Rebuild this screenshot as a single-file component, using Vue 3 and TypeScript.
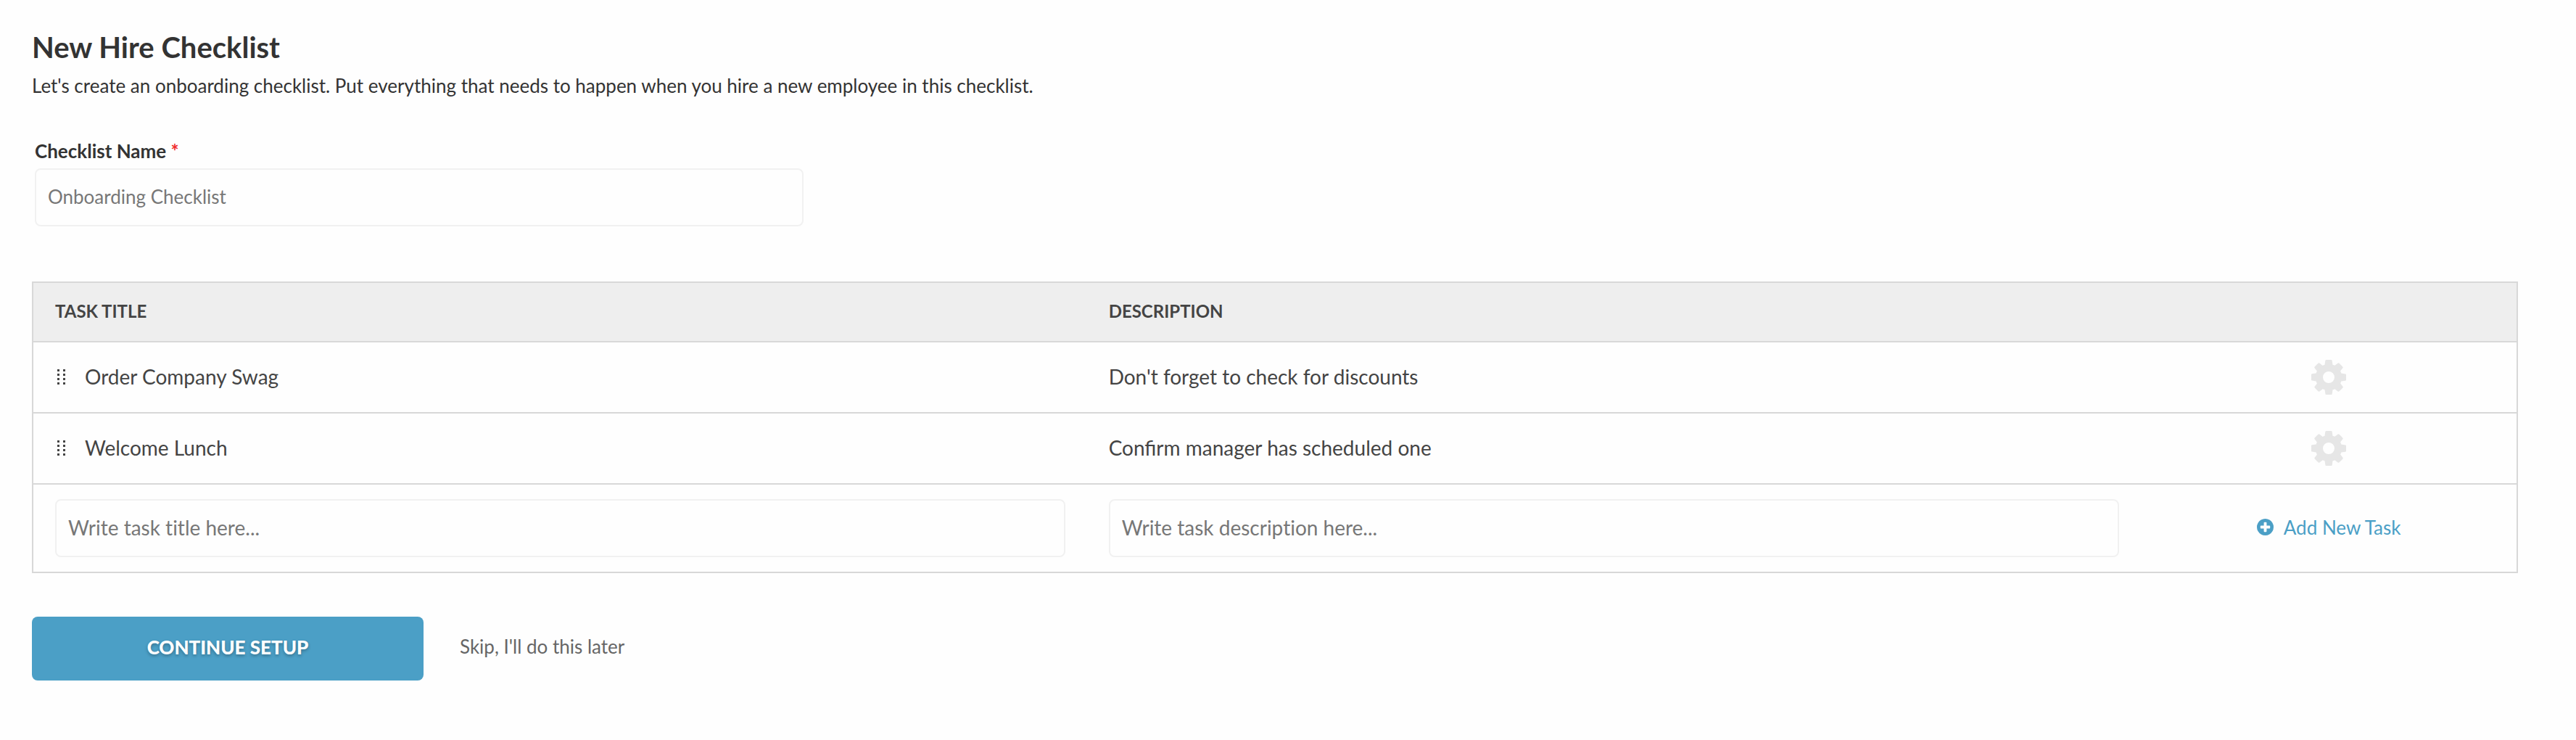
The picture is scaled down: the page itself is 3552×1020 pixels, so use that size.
<script setup lang="ts">
import { ref } from 'vue'

interface Task {
  title: string
  description: string
}

const checklistName = ref('')
const newTitle = ref('')
const newDescription = ref('')

const tasks = ref<Task[]>([
  { title: 'Order Company Swag', description: "Don't forget to check for discounts" },
  { title: 'Welcome Lunch', description: 'Confirm manager has scheduled one' },
])

function addTask() {
  if (!newTitle.value.trim()) return
  tasks.value.push({ title: newTitle.value, description: newDescription.value })
  newTitle.value = ''
  newDescription.value = ''
}
</script>

<template>
  <main class="page">
    <header>
      <h1>New Hire Checklist</h1>
      <p class="intro">
        Let's create an onboarding checklist. Put everything that needs to happen when you hire a new employee in this checklist.
      </p>
    </header>

    <div class="field">
      <label for="checklist-name">Checklist Name <span class="required">*</span></label>
      <input id="checklist-name" v-model="checklistName" class="input" type="text" placeholder="Onboarding Checklist" required />
    </div>

    <table class="tasks">
      <colgroup>
        <col class="col-text" />
        <col class="col-text" />
        <col />
      </colgroup>
      <thead>
        <tr>
          <th scope="col">TASK TITLE</th>
          <th scope="col">DESCRIPTION</th>
          <td></td>
        </tr>
      </thead>
      <tbody>
        <tr v-for="task in tasks" :key="task.title">
          <td>
            <div class="task-title">
              <svg class="grip" viewBox="0 0 11 21" aria-hidden="true">
                <template v-for="y in [0, 6, 12, 18]" :key="y">
                  <rect x="0" :y="y" width="3" height="3" />
                  <rect x="8" :y="y" width="3" height="3" />
                </template>
              </svg>
              <span>{{ task.title }}</span>
            </div>
          </td>
          <td>{{ task.description }}</td>
          <td class="actions">
            <button class="gear" type="button" :aria-label="'Settings for ' + task.title">
              <svg viewBox="0 -128 1536 1536" fill-rule="evenodd" aria-hidden="true">
                <path d="M1024 640A256 256 0 1 1 512 640A256 256 0 1 1 1024 640zM1536 531v222q0 12-8 23t-20 13l-185 28q-19 54-39 91 35 50 107 138 10 12 10 25t-9 23q-27 37-99 108t-94 71q-12 0-26-9l-138-108q-44 23-91 38-16 136-29 186-7 28-36 28h-222q-14 0-24.500-8.500t-11.500-21.500l-28-184q-49-16-90-37l-141 107q-10 9-25 9-14 0-25-11-126-114-165-168-7-10-7-23 0-12 8-23 15-21 51-66.500t54-70.500q-27-50-41-99l-183-27q-13-2-21-12.500t-8-23.500v-222q0-12 8-23t19-13l186-28q14-46 39-92-40-57-107-138-10-12-10-24 0-10 9-23 26-36 98.500-107.500t94.500-71.500q13 0 26 10l138 107q44-23 91-38 16-136 29-186 7-28 36-28h222q14 0 24.500 8.500t11.500 21.500l28 184q49 16 90 37l142-107q9-9 24-9 13 0 25 10 129 119 165 170 7 8 7 22 0 12-8 23-15 21-51 66.500t-54 70.500q26 50 41 98l183 28q13 2 21 12.500t8 23.500z" />
              </svg>
            </button>
          </td>
        </tr>
        <tr class="new-task">
          <td>
            <input v-model="newTitle" class="input" type="text" aria-label="Task title" placeholder="Write task title here..." />
          </td>
          <td>
            <input v-model="newDescription" class="input" type="text" aria-label="Task description" placeholder="Write task description here..." />
          </td>
          <td class="actions">
            <button class="add" type="button" @click="addTask">
              <svg viewBox="0 0 1536 1536" aria-hidden="true">
                <path d="M1216 832v-128q0-26-19-45t-45-19h-256v-256q0-26-19-45t-45-19h-128q-26 0-45 19t-19 45v256h-256q-26 0-45 19t-19 45v128q0 26 19 45t45 19h256v256q0 26 19 45t45 19h128q26 0 45-19t19-45v-256h256q26 0 45-19t19-45zm320-64q0 209-103 385.500t-279.500 279.500-385.500 103-385.500-103-279.500-279.500-103-385.500 103-385.500 279.500-279.500 385.500-103 385.500 103 279.500 279.500 103 385.500z" />
              </svg>
              <span>Add New Task</span>
            </button>
          </td>
        </tr>
      </tbody>
    </table>

    <footer class="footer">
      <button class="primary" type="button">CONTINUE SETUP</button>
      <a class="skip" href="#">Skip, I'll do this later</a>
    </footer>
  </main>
</template>

<style>
body {
  margin: 0;
  background: #fefefe;
}
</style>

<style scoped>
.page {
  padding: 39px 80px 80px 44px;
  font-family: Lato, 'Liberation Sans', sans-serif;
  font-size: 26px;
  line-height: 36px;
  color: #333;
}

h1 {
  margin: 0;
  font-size: 40px;
  line-height: 52px;
  font-weight: 700;
}

.intro {
  margin: 9px 0 0;
}

.field {
  display: flex;
  flex-direction: column;
  width: 31%;
  min-width: 320px;
  max-width: 1060px;
  margin: 54px 0 76px 4px;
}

label {
  margin-bottom: 6px;
  font-weight: 700;
}

.required {
  color: #f02c2c;
}

.input {
  display: block;
  box-sizing: border-box;
  width: 100%;
  height: 80px;
  padding: 0 16px 2px;
  border: 2px solid #f1f1f1;
  border-radius: 8px;
  background: transparent;
  font: inherit;
  font-variant-ligatures: none;
  color: #444;
}

.input::placeholder {
  color: #777;
  opacity: 1;
}

button {
  padding: 0;
  border: 0;
  background: none;
  font: inherit;
  cursor: pointer;
}

.tasks {
  width: 100%;
  table-layout: fixed;
  border-collapse: collapse;
  border: 2px solid #d8d8d8;
  font-size: 28px;
  color: #444;
}

.col-text {
  width: 42.43%;
}

.tasks tr {
  height: 98px;
  border-bottom: 2px solid #d8d8d8;
}

.tasks th,
.tasks td {
  padding: 0 30px 2px;
  text-align: left;
  vertical-align: middle;
}

.tasks thead tr {
  height: 82px;
  background: #eee;
}

.tasks th {
  font-size: 24px;
  font-weight: 700;
}

.tasks .actions {
  padding-bottom: 0;
  text-align: center;
}

.tasks .new-task td {
  padding-top: 20px;
  padding-bottom: 20px;
}

.task-title {
  display: flex;
  align-items: center;
  gap: 27px;
  padding-left: 3px;
}

.grip {
  width: 11px;
  height: 21px;
  fill: #444;
}

.gear {
  display: inline-block;
  width: 48px;
  height: 48px;
  vertical-align: middle;
}

.gear svg {
  display: block;
  fill: #e6e6e6;
}

.add {
  display: inline-flex;
  align-items: center;
  gap: 14px;
  padding-bottom: 4px;
  font-size: 26px;
  vertical-align: middle;
  color: #4b9fc6;
}

.add svg {
  width: 23px;
  height: 23px;
  fill: currentColor;
}

.footer {
  display: flex;
  align-items: center;
  gap: 50px;
  margin-top: 60px;
}

.primary {
  width: 540px;
  height: 88px;
  padding-bottom: 4px;
  border-radius: 8px;
  background: #4b9fc6;
  font-weight: 900;
  color: #fff;
  text-shadow: 0 2px 4px rgba(0, 0, 0, 0.3);
}

.skip {
  padding-bottom: 6px;
  color: #666;
  text-decoration: none;
}
</style>
